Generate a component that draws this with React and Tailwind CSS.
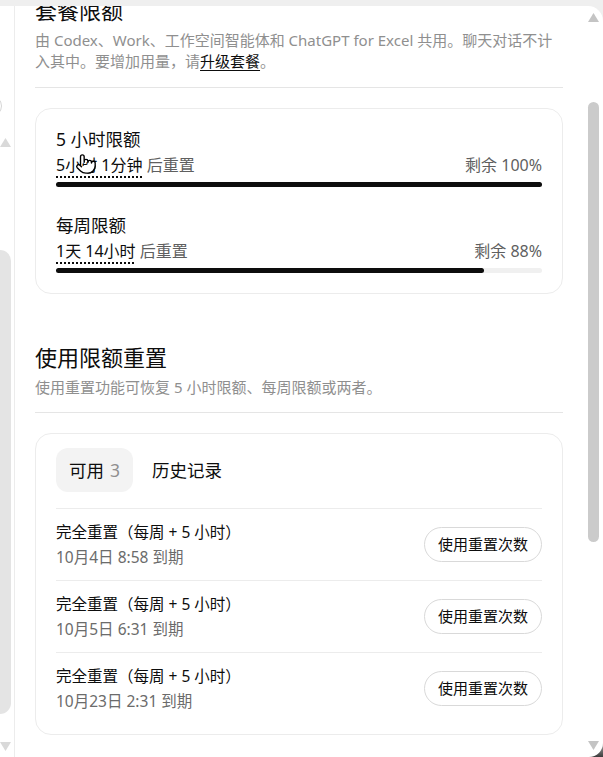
import React from "react";
import { Pointer } from "lucide-react";

const LIMITS = [
  { title: "5 小时限额", reset: "5小时 1分钟", left: 100 },
  { title: "每周限额", reset: "1天 14小时", left: 88 },
];

const RESETS = [
  { title: "完全重置（每周 + 5 小时）", expires: "10月4日 8:58 到期" },
  { title: "完全重置（每周 + 5 小时）", expires: "10月5日 6:31 到期" },
  { title: "完全重置（每周 + 5 小时）", expires: "10月23日 2:31 到期" },
];

const Arrow = ({ down, color }) => (
  <svg width="11" height="9" viewBox="0 0 11 9" className="shrink-0">
    <polygon
      points={down ? "0,0 11,0 5.5,9" : "5.5,0 11,9 0,9"}
      fill={color}
    />
  </svg>
);

const LimitRow = ({ title, reset, left, first }) => (
  <div className={first ? "" : "mt-[25px]"}>
    <p className="text-[17.5px] leading-[26px] text-[#0d0d0d]">{title}</p>
    <div className="flex items-center justify-between text-[16px] leading-[27px]">
      <span className="text-[#5f5f5f]">
        <span className="text-[#0d0d0d] underline decoration-dotted decoration-[1.5px] underline-offset-[5px]">
          {reset}
        </span>{" "}
        后重置
      </span>
      <span className="text-[#5f5f5f]">剩余 {left}%</span>
    </div>
    <div className="mt-[3px] h-[5px] w-full rounded-full bg-[#f0f0f0]">
      <div
        className="h-full rounded-full bg-[#0d0d0d]"
        style={{ width: `${left}%` }}
      />
    </div>
  </div>
);

const ResetRow = ({ title, expires }) => (
  <div className="flex h-[72px] items-center justify-between border-t border-[#ececec]">
    <div>
      <p className="text-[15.5px] leading-[25px] text-[#0d0d0d]">{title}</p>
      <p className="text-[15.5px] leading-[24px] text-[#6b6b6b]">{expires}</p>
    </div>
    <button className="h-[35px] rounded-full border border-[#d9d9d9] bg-white px-[13px] text-[15px] text-[#0d0d0d]">
      使用重置次数
    </button>
  </div>
);

export default function App() {
  return (
    <div className="relative h-[757px] w-[603px] overflow-hidden bg-[linear-gradient(to_bottom,#efefef_97%,#3c3c3c_100%)] pt-[6px] font-['Noto_Sans','Noto_Sans_CJK_SC',sans-serif]">
      <div className="flex h-full overflow-hidden rounded-tr-[15px] rounded-br-[14px] bg-white">
        {/* left page scrollbar */}
        <div className="flex w-[15px] shrink-0 flex-col overflow-hidden border-r border-[#ececec] pb-[6px]">
          <div className="mt-[89px] -ml-[20px] h-[22px] w-[22px] shrink-0 rounded-full border border-[#d6d6d6]" />
          <div className="mt-[21px]">
            <Arrow color="#d9d9d9" />
          </div>
          <div className="mt-[103px] h-[464px] w-[11px] shrink-0 rounded-r-full bg-[#e4e4e4]" />
          <div className="flex-1" />
          <Arrow down color="#d9d9d9" />
        </div>

        {/* panel content */}
        <div className="min-w-0 flex-1 overflow-hidden pl-[20px] pr-[22px]">
          <div className="-mt-[11px]">
            <div className="border-b border-[#e5e5e5] pb-[15px]">
              <h2 className="text-[22px] leading-[30px] text-[#0d0d0d]">套餐限额</h2>
              <p className="mt-[5px] text-[15px] leading-[21px] text-[#8f8f8f]">
                由 Codex、Work、工作空间智能体和 ChatGPT for Excel 共用。聊天对话不计入其中。要增加用量，请
                <a className="text-[#0d0d0d] underline underline-offset-[3px]">升级套餐</a>。
              </p>
            </div>

            <div className="mt-[20px] rounded-[16px] border border-[#ececec] px-[20px] pt-[17px] pb-[20px]">
              {LIMITS.map((l, i) => (
                <LimitRow key={i} {...l} first={i === 0} />
              ))}
            </div>

            <div className="mt-[48px] border-b border-[#e5e5e5] pb-[14px]">
              <h2 className="text-[22px] leading-[30px] text-[#0d0d0d]">使用限额重置</h2>
              <p className="mt-[5px] text-[15px] leading-[21px] text-[#8f8f8f]">
                使用重置功能可恢复 5 小时限额、每周限额或两者。
              </p>
            </div>

            <div className="mt-[20px] rounded-[16px] border border-[#ececec] px-[20px] pt-[14px] pb-[10px]">
              <div className="mb-[16px] flex gap-[6px]">
                <div className="flex h-[44px] items-center rounded-[12px] bg-[#f3f3f3] px-[13px] text-[17.5px] text-[#0d0d0d]">
                  可用<span className="ml-[6px] text-[#8f8f8f]">3</span>
                </div>
                <div className="flex h-[44px] items-center px-[13px] text-[17.5px] text-[#0d0d0d]">
                  历史记录
                </div>
              </div>
              {RESETS.map((r, i) => (
                <ResetRow key={i} {...r} />
              ))}
            </div>
          </div>
        </div>

        {/* panel scrollbar */}
        <div className="flex w-[18px] shrink-0 flex-col pt-[7px] pb-[7px] pl-[3px]">
          <Arrow color="#c4c4c4" />
          <div className="mt-[80px] h-[440px] w-[11px] shrink-0 rounded-full bg-[#cbcbcb]" />
          <div className="flex-1" />
          <Arrow down color="#c4c4c4" />
        </div>
      </div>

      <Pointer
        size={22}
        fill="#ffffff"
        stroke="#000000"
        strokeWidth={1.5}
        className="absolute left-[75px] top-[153px]"
      />
    </div>
  );
}
